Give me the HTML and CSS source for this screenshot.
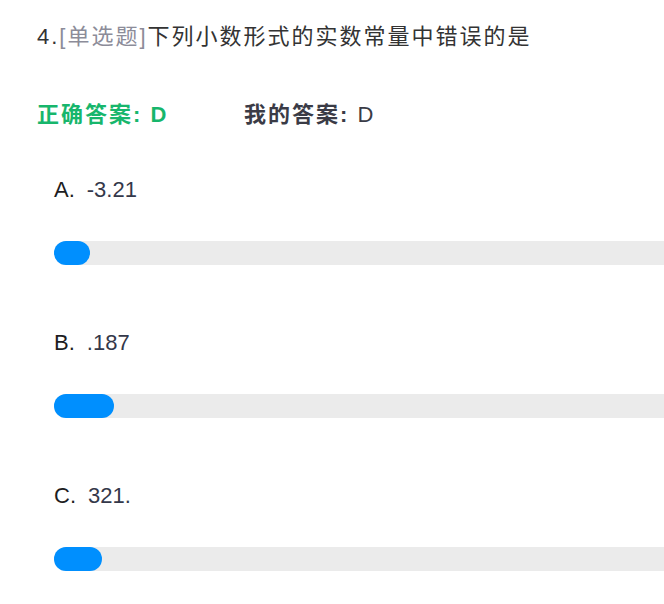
FILE: index.html
```html
<!DOCTYPE html>
<html lang="zh-CN">
<head>
<meta charset="utf-8">
<title>单选题</title>
<link rel="stylesheet" href="styles.css">
</head>
<body>
<div class="question">
  <div class="title"><span class="num">4.</span><span class="type">[单选题]</span><span class="stem">下列小数形式的实数常量中错误的是</span></div>
  <div class="answers">
    <div class="correct"><b>正确答案:</b> <b>D</b></div>
    <div class="mine"><b>我的答案:</b> D</div>
  </div>
  <div class="options">
    <div class="option">
      <div class="opt-text"><span class="opt-label">A.</span><span class="opt-value">-3.21</span></div>
      <div class="track"><div class="fill" style="width:36px"></div></div>
    </div>
    <div class="option">
      <div class="opt-text"><span class="opt-label">B.</span><span class="opt-value">.187</span></div>
      <div class="track"><div class="fill" style="width:60px"></div></div>
    </div>
    <div class="option">
      <div class="opt-text"><span class="opt-label">C.</span><span class="opt-value">321.</span></div>
      <div class="track"><div class="fill" style="width:48px"></div></div>
    </div>
  </div>
</div>
</body>
</html>
```
FILE: styles.css
```css
html {
  background: #ffffff;
}
body {
  margin: 0;
  font-family: "Liberation Sans", "Noto Sans CJK SC", sans-serif;
  color: #333333;
}
.question {
  padding: 22px 0 0 37px;
}
.title {
  font-size: 22px;
  line-height: 30px;
  letter-spacing: 2px;
  white-space: nowrap;
  color: #333333;
}
.title .type {
  color: #8c8c99;
}
.answers {
  margin-top: 48px;
  display: flex;
  font-size: 22px;
  line-height: 30px;
  letter-spacing: 2px;
  white-space: nowrap;
}
.answers b {
  font-weight: bold;
}
.correct {
  color: #17b66c;
  width: 207px;
}
.mine {
  color: #3a3b46;
}
.options {
  margin-top: 45px;
  padding-left: 17px;
}
.option {
  margin-bottom: 63px;
}
.opt-text {
  font-size: 22px;
  line-height: 30px;
  white-space: nowrap;
  color: #34384a;
}
.opt-label {
  color: #1d1d22;
  margin-right: 12px;
}
.track {
  margin-top: 36px;
  height: 24px;
  background: #ebebeb;
  border-radius: 12px 0 0 12px;
}
.fill {
  height: 24px;
  background: #008ffe;
  border-radius: 12px;
}
```
